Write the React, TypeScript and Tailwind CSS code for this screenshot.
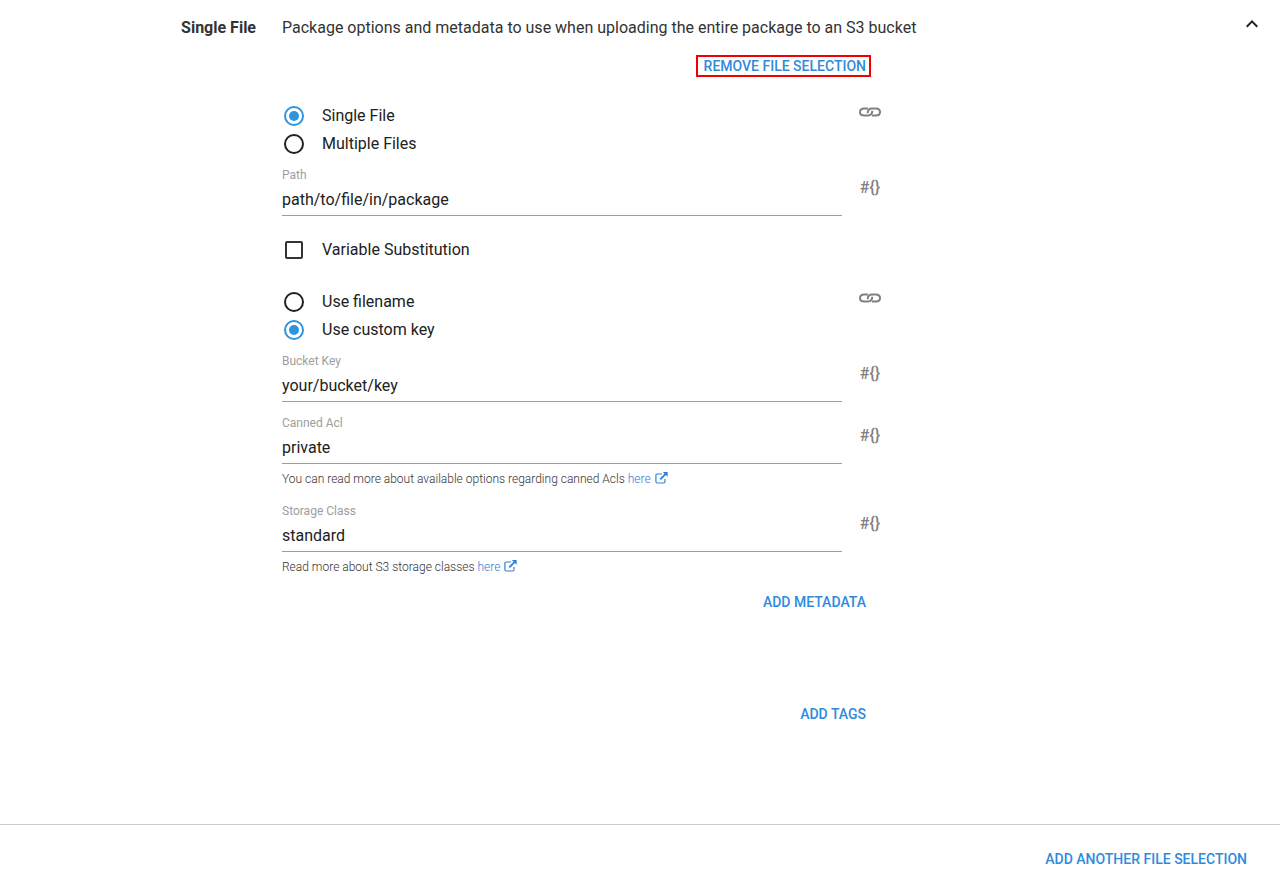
import { useState } from 'react';
import type { ReactNode } from 'react';
import { MdKeyboardArrowUp } from 'react-icons/md';

interface ChoiceProps {
    type: 'radio' | 'checkbox';
    name: string;
    label: string;
    checked: boolean;
    onChange: () => void;
}

function Choice({ type, name, label, checked, onChange }: ChoiceProps) {
    const shape =
        type === 'radio'
            ? 'mx-[2px] size-5 rounded-full border-[#212121] checked:border-[#2f93e0] checked:before:size-[10px] checked:before:rounded-full checked:before:bg-[#2f93e0]'
            : 'mx-[3px] size-[18px] rounded-[2px] border-[#333] checked:border-[#2f93e0] checked:bg-[#2f93e0]';
    return (
        <label className="flex h-7 items-center gap-4">
            <input
                type={type}
                name={name}
                checked={checked}
                onChange={onChange}
                className={`flex shrink-0 appearance-none items-center justify-center border-2 ${shape}`}
            />
            <span>{label}</span>
        </label>
    );
}

function LinkIcon() {
    return (
        <svg width="22" height="10" viewBox="0 0 22 10" fill="none" stroke="#808080" strokeWidth="2">
            <path d="M9 1.5H5.2C2.600 1.500 1 2.700 1 5s1.600 3.500 4.200 3.500H9c2.600 0 4.300-1.800 4.300-4.700" />
            <path d="M13 8.500h3.800c2.600 0 4.200-1.200 4.200-3.500s-1.600-3.500-4.200-3.500H13c-2.600 0-4.300 1.800-4.300 4.700" />
        </svg>
    );
}

function BindButton({ label, children }: { label: string; children: ReactNode }) {
    return (
        <button
            type="button"
            aria-label={label}
            className="ml-4 flex h-5 w-6 shrink-0 items-center justify-center font-medium text-[#808080]"
        >
            {children}
        </button>
    );
}

function ChoiceGroup({ label, children }: { label: string; children: ReactNode }) {
    return (
        <div role="radiogroup" aria-label={label} className="flex items-start">
            <div className="min-w-0 flex-1">{children}</div>
            <BindButton label={`Bind ${label}`}>
                <LinkIcon />
            </BindButton>
        </div>
    );
}

function Field({ id, label, value }: { id: string; label: string; value: string }) {
    const [text, setText] = useState(value);
    return (
        <div className="flex items-start">
            <div className="min-w-0 flex-1">
                <label htmlFor={id} className="block pt-px text-xs leading-4 text-[#9e9e9e]">{label}</label>
                <input
                    id={id}
                    value={text}
                    onChange={(e) => setText(e.target.value)}
                    className="block h-[33px] w-full border-b border-[#9e9e9e] pt-px outline-none"
                />
            </div>
            <div className="pt-3">
                <BindButton label={`Bind ${label}`}>{'#{}'}</BindButton>
            </div>
        </div>
    );
}

function Note({ children }: { children: ReactNode }) {
    return (
        <p className="pt-[5px] text-xs leading-5 font-light text-[#333]">
            {children}{' '}
            <a href="#" className="text-[#2f80d8]">
                here
                <svg width="13" height="12" viewBox="0 0 13 12" fill="none" stroke="currentColor" className="ml-1 inline-block align-[-1px]">
                    <path d="M7 2H2.3C1.4 2 .9 2.5.9 3.3v6.2c0 .9.5 1.5 1.4 1.5h6.2c.9 0 1.5-.6 1.5-1.5V7" strokeWidth="1.2" />
                    <path d="M5.3 7.3l5.4-5.4" strokeWidth="1.9" />
                    <path d="M7.8 0h4.8v4.8z" fill="currentColor" stroke="none" />
                </svg>
            </a>
        </p>
    );
}

function FlatButton({ children }: { children: ReactNode }) {
    return (
        <button type="button" className="h-9 px-4 text-sm font-medium text-[#2f8ade] uppercase">
            {children}
        </button>
    );
}

export default function App() {
    const [fileMode, setFileMode] = useState('single');
    const [keyMode, setKeyMode] = useState('custom');
    const [substitute, setSubstitute] = useState(false);
    const [open, setOpen] = useState(true);

    return (
        <div className="min-h-screen bg-white font-[Roboto,sans-serif] text-base leading-6 text-[#212121]">
            <section className="flex items-start border-b border-[#ccc] pt-3 pb-[92px]">
                <h2 className="mt-1 w-1/5 shrink-0 text-right font-bold text-[#333]">Single File</h2>

                <div className="min-w-0 flex-1 pl-[26px]">
                    <p className="mt-1 text-[#333]">Package options and metadata to use when uploading the entire package to an S3 bucket</p>

                    {open && (
                        <div className="max-w-[600px]">
                            <div className="mt-[15px] flex justify-end pr-[11px]">
                                <button
                                    type="button"
                                    className="h-[22px] border-2 border-[#f00000] pr-[3px] pl-[6px] text-sm leading-4 font-medium text-[#2f8ade]"
                                >
                                    REMOVE FILE SELECTION
                                </button>
                            </div>

                            <div className="mt-[25px]">
                                <ChoiceGroup label="file selection">
                                    <Choice type="radio" name="file-mode" label="Single File" checked={fileMode === 'single'} onChange={() => setFileMode('single')} />
                                    <Choice type="radio" name="file-mode" label="Multiple Files" checked={fileMode === 'multiple'} onChange={() => setFileMode('multiple')} />
                                </ChoiceGroup>
                            </div>

                            <div className="mt-2">
                                <Field id="path" label="Path" value="path/to/file/in/package" />
                            </div>

                            <div className="mt-5">
                                <Choice type="checkbox" name="substitution" label="Variable Substitution" checked={substitute} onChange={() => setSubstitute(!substitute)} />
                            </div>

                            <div className="mt-6">
                                <ChoiceGroup label="key option">
                                    <Choice type="radio" name="key-mode" label="Use filename" checked={keyMode === 'filename'} onChange={() => setKeyMode('filename')} />
                                    <Choice type="radio" name="key-mode" label="Use custom key" checked={keyMode === 'custom'} onChange={() => setKeyMode('custom')} />
                                </ChoiceGroup>
                            </div>

                            <div className="mt-2">
                                <Field id="bucket-key" label="Bucket Key" value="your/bucket/key" />
                            </div>

                            <div className="mt-3">
                                <Field id="canned-acl" label="Canned Acl" value="private" />
                                <Note>You can read more about available options regarding canned Acls</Note>
                            </div>

                            <div className="mt-[13px]">
                                <Field id="storage-class" label="Storage Class" value="standard" />
                                <Note>Read more about S3 storage classes</Note>
                            </div>

                            <div className="mt-[7px] flex flex-col items-end gap-[76px]">
                                <FlatButton>Add metadata</FlatButton>
                                <FlatButton>Add tags</FlatButton>
                            </div>
                        </div>
                    )}
                </div>

                <button type="button" aria-label="Toggle section" onClick={() => setOpen(!open)} className="mr-4 shrink-0">
                    <MdKeyboardArrowUp size={24} />
                </button>
            </section>

            <footer className="flex justify-end px-[17px] py-4">
                <FlatButton>Add another file selection</FlatButton>
            </footer>
        </div>
    );
}
